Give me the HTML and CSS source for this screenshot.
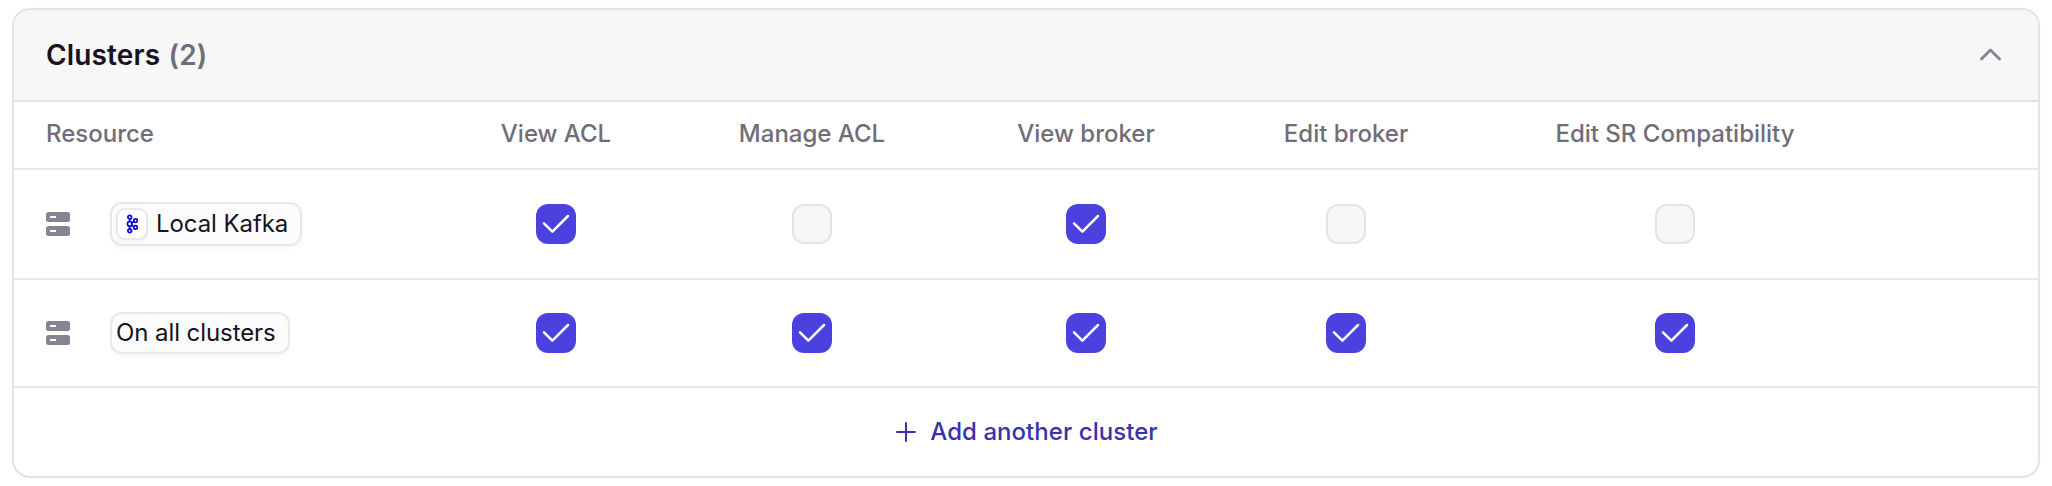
FILE: index.html
```html
<!DOCTYPE html>
<html lang="en">
<head>
<meta charset="utf-8">
<title>Clusters</title>
<link rel="stylesheet" href="styles.css">
</head>
<body>
<svg class="defs" aria-hidden="true">
  <symbol id="server" viewBox="0 0 24 24">
    <rect x="0" y="0" width="24" height="10" rx="2.5" fill="#868490"/>
    <rect x="0" y="14" width="24" height="10" rx="2.5" fill="#868490"/>
    <path d="M4 5h6M4 19h6" stroke="#fff" stroke-width="2"/>
  </symbol>
  <symbol id="check" viewBox="0 0 40 40">
    <path d="M8 19.4L16.4 27.6L32 12" fill="none" stroke="#fff" stroke-width="2.5" stroke-linecap="round" stroke-linejoin="round"/>
  </symbol>
  <symbol id="kafka" viewBox="0 0 12 20">
    <g fill="none" stroke="#1010d0" stroke-width="1.8">
      <circle cx="3.7" cy="3.2" r="1.8"/>
      <circle cx="3.7" cy="10" r="2.3"/>
      <circle cx="3.7" cy="16.8" r="1.8"/>
      <circle cx="9.5" cy="6.6" r="1.8"/>
      <circle cx="9.5" cy="13.4" r="1.8"/>
      <path d="M3.7 5v2.6M3.7 12.4V15M5.8 8.8L8 7.5M5.8 11.2L8 12.5"/>
    </g>
  </symbol>
</svg>
<section class="card">
  <header class="card-header">
    <h2 class="title">Clusters <span class="count">(2)</span></h2>
    <svg class="chevron" viewBox="0 0 24 24"><path d="M3.4 17L12.4 8L21.6 17" fill="none" stroke="#868490" stroke-width="2.8" stroke-linecap="round" stroke-linejoin="round"/></svg>
  </header>
  <div class="row head">
    <div class="resource">Resource</div>
    <div class="cell">View ACL</div>
    <div class="cell">Manage ACL</div>
    <div class="cell">View broker</div>
    <div class="cell">Edit broker</div>
    <div class="cell">Edit SR Compatibility</div>
  </div>
  <div class="row first">
    <div class="resource">
      <svg class="server"><use href="#server"/></svg>
      <span class="chip with-icon"><span class="chip-icon"><svg class="kafka"><use href="#kafka"/></svg></span><span class="chip-label">Local Kafka</span></span>
    </div>
    <div class="cell"><span class="box on"><svg class="check"><use href="#check"/></svg></span></div>
    <div class="cell"><span class="box"></span></div>
    <div class="cell"><span class="box on"><svg class="check"><use href="#check"/></svg></span></div>
    <div class="cell"><span class="box"></span></div>
    <div class="cell"><span class="box"></span></div>
  </div>
  <div class="row second">
    <div class="resource">
      <svg class="server"><use href="#server"/></svg>
      <span class="chip">On all clusters</span>
    </div>
    <div class="cell"><span class="box on"><svg class="check"><use href="#check"/></svg></span></div>
    <div class="cell"><span class="box on"><svg class="check"><use href="#check"/></svg></span></div>
    <div class="cell"><span class="box on"><svg class="check"><use href="#check"/></svg></span></div>
    <div class="cell"><span class="box on"><svg class="check"><use href="#check"/></svg></span></div>
    <div class="cell"><span class="box on"><svg class="check"><use href="#check"/></svg></span></div>
  </div>
  <div class="footer">
    <svg class="plus" viewBox="0 0 20 20"><path d="M10 1v18M1 10h18" stroke="#3a32a8" stroke-width="2" stroke-linecap="round"/></svg>
    <span class="add">Add another cluster</span>
  </div>
</section>
</body>
</html>
```

FILE: styles.css
```css
* { box-sizing: border-box; }
body {
  margin: 0;
  padding: 10px 14px;
  background: #fff;
  font-family: Inter, "Liberation Sans", sans-serif;
  font-size: 24px;
  color: #16121f;
}
.defs { display: none; }
.card {
  height: 466px;
  border-radius: 16px;
  background: #fff;
  box-shadow: 0 0 0 2px rgba(0, 0, 0, 0.08), 0 0 2px 2px rgba(0, 0, 0, 0.04);
  overflow: hidden;
}
.card-header {
  display: flex;
  align-items: center;
  justify-content: space-between;
  height: 92px;
  padding: 0 36px 0 32px;
  background: #f7f7f7;
  border-bottom: 2px solid #e2e2e2;
}
.title {
  margin: 0;
  font-size: 28px;
  font-weight: 600;
  line-height: 40px;
  letter-spacing: 0.15px;
}
.count {
  margin-left: 1px;
  color: #6f6d78;
}
.chevron {
  width: 24px;
  height: 24px;
  margin-bottom: 3px;
}
.row {
  display: grid;
  grid-template-columns: 423px 238px 274px 274px 246px 412px;
  align-items: center;
  border-bottom: 2px solid #e8e8e8;
}
.head {
  height: 68px;
  padding-bottom: 4px;
  color: #6f6d78;
  font-weight: 500;
}
.first { height: 110px; }
.second { height: 108px; }
.resource {
  display: flex;
  align-items: center;
  padding-left: 32px;
}
.cell {
  display: flex;
  justify-content: center;
  white-space: nowrap;
}
.server {
  width: 24px;
  height: 24px;
  margin-right: 40px;
}
.chip {
  display: flex;
  align-items: center;
  height: 42px;
  padding: 0 12px 2px 4px;
  border: 2px solid #e8e8e8;
  border-radius: 12px;
  background: #fcfcfc;
  box-shadow: 0 2px 4px rgba(0, 0, 0, 0.04);
  letter-spacing: -0.08px;
  white-space: nowrap;
}
.with-icon {
  height: 44px;
  padding-bottom: 0;
}
.chip-label { padding-bottom: 2px; }
.chip-icon {
  display: flex;
  align-items: center;
  justify-content: center;
  width: 32px;
  height: 32px;
  margin-right: 8px;
  border: 2px solid #e8e8e8;
  border-radius: 9px;
  background: #fff;
  box-shadow: 0 2px 4px rgba(0, 0, 0, 0.04);
}
.kafka { width: 12px; height: 20px; }
.box {
  display: block;
  width: 40px;
  height: 40px;
  border: 2px solid #e3e3e3;
  border-radius: 12px;
  background: #f7f7f7;
}
.on {
  border: 0;
  background: #4b41de;
}
.check { display: block; width: 40px; height: 40px; }
.footer {
  display: flex;
  align-items: center;
  justify-content: center;
  gap: 14px;
  height: 88px;
  padding: 0 0 1px 2px;
  color: #3a32a8;
  font-weight: 500;
}
.add { padding-bottom: 1px; letter-spacing: 0.05px; }
.plus { width: 20px; height: 20px; }
```
